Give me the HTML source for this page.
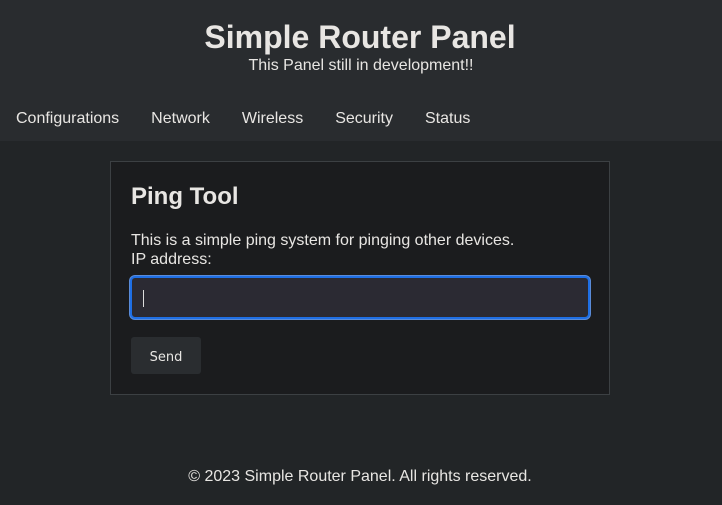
<!DOCTYPE html>
<html><head><style>
body{margin:0;background:#222527;font-family:"Liberation Sans",sans-serif;color:#e8e6e3;width:722px;height:505px;overflow:hidden;position:relative}
header{position:absolute;left:0;top:0;width:722px;height:141px;background:#292c2f}
h1{position:absolute;top:19px;left:-1px;width:722px;text-align:center;margin:0;font-size:32px;font-weight:bold;line-height:36px}
.sub{position:absolute;top:57px;left:0;width:722px;text-align:center;font-size:16px;line-height:18px}
nav{position:absolute;top:110px;left:16px;font-size:16px;line-height:18px}
nav span{margin-right:32px}
.card{position:absolute;left:110px;top:161px;width:498px;height:232px;border:1px solid #3c4043;background:#1b1c1e}
h2{position:absolute;left:20px;top:21px;margin:0;font-size:24px;line-height:28px}
.p{position:absolute;left:20px;top:69px;font-size:16px;line-height:19px}
.in{position:absolute;left:19px;top:114px;width:456px;height:39px;border:2px solid #1f6fe5;border-radius:5px;background:#2b2a33;box-shadow:0 0 0 1px #5a8bd8}
.cur{position:absolute;left:11px;top:12px;width:1px;height:17px;background:#ddd}
.btn{position:absolute;left:20px;top:175px;width:70px;height:37px;background:#2a2d30;border-radius:3px;font-family:"DejaVu Sans",sans-serif;font-size:13px;line-height:41px;text-align:center}
footer{position:absolute;top:468px;left:-1px;width:722px;text-align:center;font-size:16px;line-height:18px}
</style></head><body>
<header>
<h1>Simple Router Panel</h1>
<div class="sub">This Panel still in development!!</div>
<nav><span>Configurations</span><span>Network</span><span>Wireless</span><span>Security</span><span>Status</span></nav>
</header>
<div class="card">
<h2>Ping Tool</h2>
<div class="p">This is a simple ping system for pinging other devices.<br>IP address:</div>
<div class="in"><div class="cur"></div></div>
<div class="btn">Send</div>
</div>
<footer>© 2023 Simple Router Panel. All rights reserved.</footer>
</body></html>
